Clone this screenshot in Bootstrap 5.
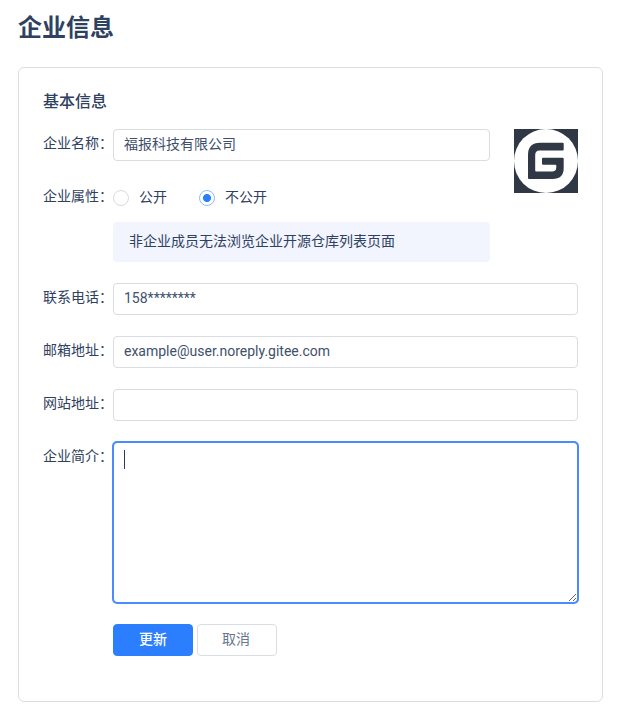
<!DOCTYPE html>
<html lang="zh-CN">
<head>
<meta charset="utf-8">
<meta name="viewport" content="width=device-width, initial-scale=1">
<title>企业信息</title>
<link href="https://cdn.jsdelivr.net/npm/bootstrap@5.3.0/dist/css/bootstrap.min.css" rel="stylesheet">
<style>
body{font-family:Roboto,"Noto Sans CJK SC",sans-serif;font-size:14px;line-height:20px;color:#2f4160;overflow:hidden}
.page{padding:11px 17px 0 18px}
.page-title{font-size:24px;line-height:34px;font-weight:700;margin-bottom:22px}
.panel{height:635px;border:1px solid #dcdde4;border-radius:6px;padding:23px 24px 0}
.section-title{font-size:16px;line-height:22px;font-weight:500;margin-bottom:16px}
.field-label{width:70px;flex:none;line-height:28px;white-space:nowrap}
.field-row{margin-bottom:21px}
.form-control{height:32px;padding:4px 10px;font-size:14px;line-height:20px;border:1px solid #d9dce2;border-radius:4px;color:#40506b}
.short{width:377px}
.form-control.short{padding:3px 10px 7px}
.form-control.latin{padding:3px 10px 5px}
.radios{padding-top:5px}
.opt{margin-left:10px}
.form-check-input.dot{width:16px;height:16px;margin:1px 0 0;border:1px solid #d9dbe0;background-image:none;box-shadow:none}
.form-check-input.dot:checked{border-color:#8fbdfa;background:radial-gradient(circle,#2a80fb 0 3.6px,#fff 4.4px)}
.form-check-input.second{margin-left:32px}
.note{height:40px;padding:9px 16px;border-radius:4px;background:#f2f4fe;margin-top:15px}
textarea.form-control.intro{height:161px;border-color:#4a8bff;box-shadow:0 0 0 1px #4a8bff;resize:both}
.caret{position:absolute;left:11px;top:8px;width:1px;height:19px;background:#2b3a59}
.actions{padding-left:70px}
.action{width:80px;height:32px;padding:0 0 2px;font-size:14px;line-height:28px;border-radius:4px}
.save{background:#2b7fff;border-color:#2b7fff;color:#fff;font-weight:500}
.cancel{background:#fff;border-color:#dadde4;color:#68758c;padding-right:2px}
</style>
</head>
<body class="bg-white">
<main class="page">
  <h1 class="page-title">企业信息</h1>
  <section class="panel">
    <h2 class="section-title">基本信息</h2>
    <form>
      <div class="d-flex justify-content-between align-items-start">
        <div>
          <div class="d-flex field-row">
            <label class="field-label" for="name">企业名称：</label>
            <input id="name" class="form-control short" value="福报科技有限公司">
          </div>
          <div class="d-flex field-row">
            <span class="field-label">企业属性：</span>
            <div class="short">
              <div class="d-flex align-items-center radios">
                <input class="form-check-input dot" type="radio" name="vis" id="pub"><label class="opt" for="pub">公开</label>
                <input class="form-check-input dot second" type="radio" name="vis" id="priv" checked><label class="opt" for="priv">不公开</label>
              </div>
              <div class="note">非企业成员无法浏览企业开源仓库列表页面</div>
            </div>
          </div>
        </div>
        <svg width="64" height="64" viewBox="0 0 64 64" role="img" aria-label="Gitee">
          <path fill="#303845" d="M0 0h64v64H0z"/>
          <circle cx="32" cy="32" r="32" fill="#fff"/>
          <path fill="#303845" d="M26 13.800H48.700Q49.700 13.800 49.700 14.800V20.500Q49.700 21.500 48.700 21.500H25.500Q21.200 21.500 21.200 26V41.600Q21.200 42.600 22.200 42.600H38Q42.300 42.600 42.300 38.300V36.800Q42.300 35.800 41.300 35.800H29Q28 35.800 28 34.800V29.700Q28 28.700 29 28.700H48.700Q49.700 28.700 49.700 29.700V39Q49.700 50 38.500 50H15Q14 50 14 49V26Q14 13.800 26 13.800Z"/>
        </svg>
      </div>
      <div class="d-flex field-row">
        <label class="field-label" for="phone">联系电话：</label>
        <input id="phone" class="form-control latin" value="158********">
      </div>
      <div class="d-flex field-row">
        <label class="field-label" for="mail">邮箱地址：</label>
        <input id="mail" class="form-control latin" value="example@user.noreply.gitee.com">
      </div>
      <div class="d-flex field-row">
        <label class="field-label" for="site">网站地址：</label>
        <input id="site" class="form-control">
      </div>
      <div class="d-flex field-row">
        <label class="field-label" for="intro">企业简介：</label>
        <div class="position-relative flex-grow-1">
          <textarea id="intro" class="form-control intro d-block"></textarea>
          <span class="caret"></span>
        </div>
      </div>
      <div class="d-flex gap-1 actions">
        <button type="button" class="btn action save">更新</button>
        <button type="button" class="btn action cancel">取消</button>
      </div>
    </form>
  </section>
</main>
<script src="https://cdn.jsdelivr.net/npm/bootstrap@5.3.0/dist/js/bootstrap.bundle.min.js"></script>
</body>
</html>
